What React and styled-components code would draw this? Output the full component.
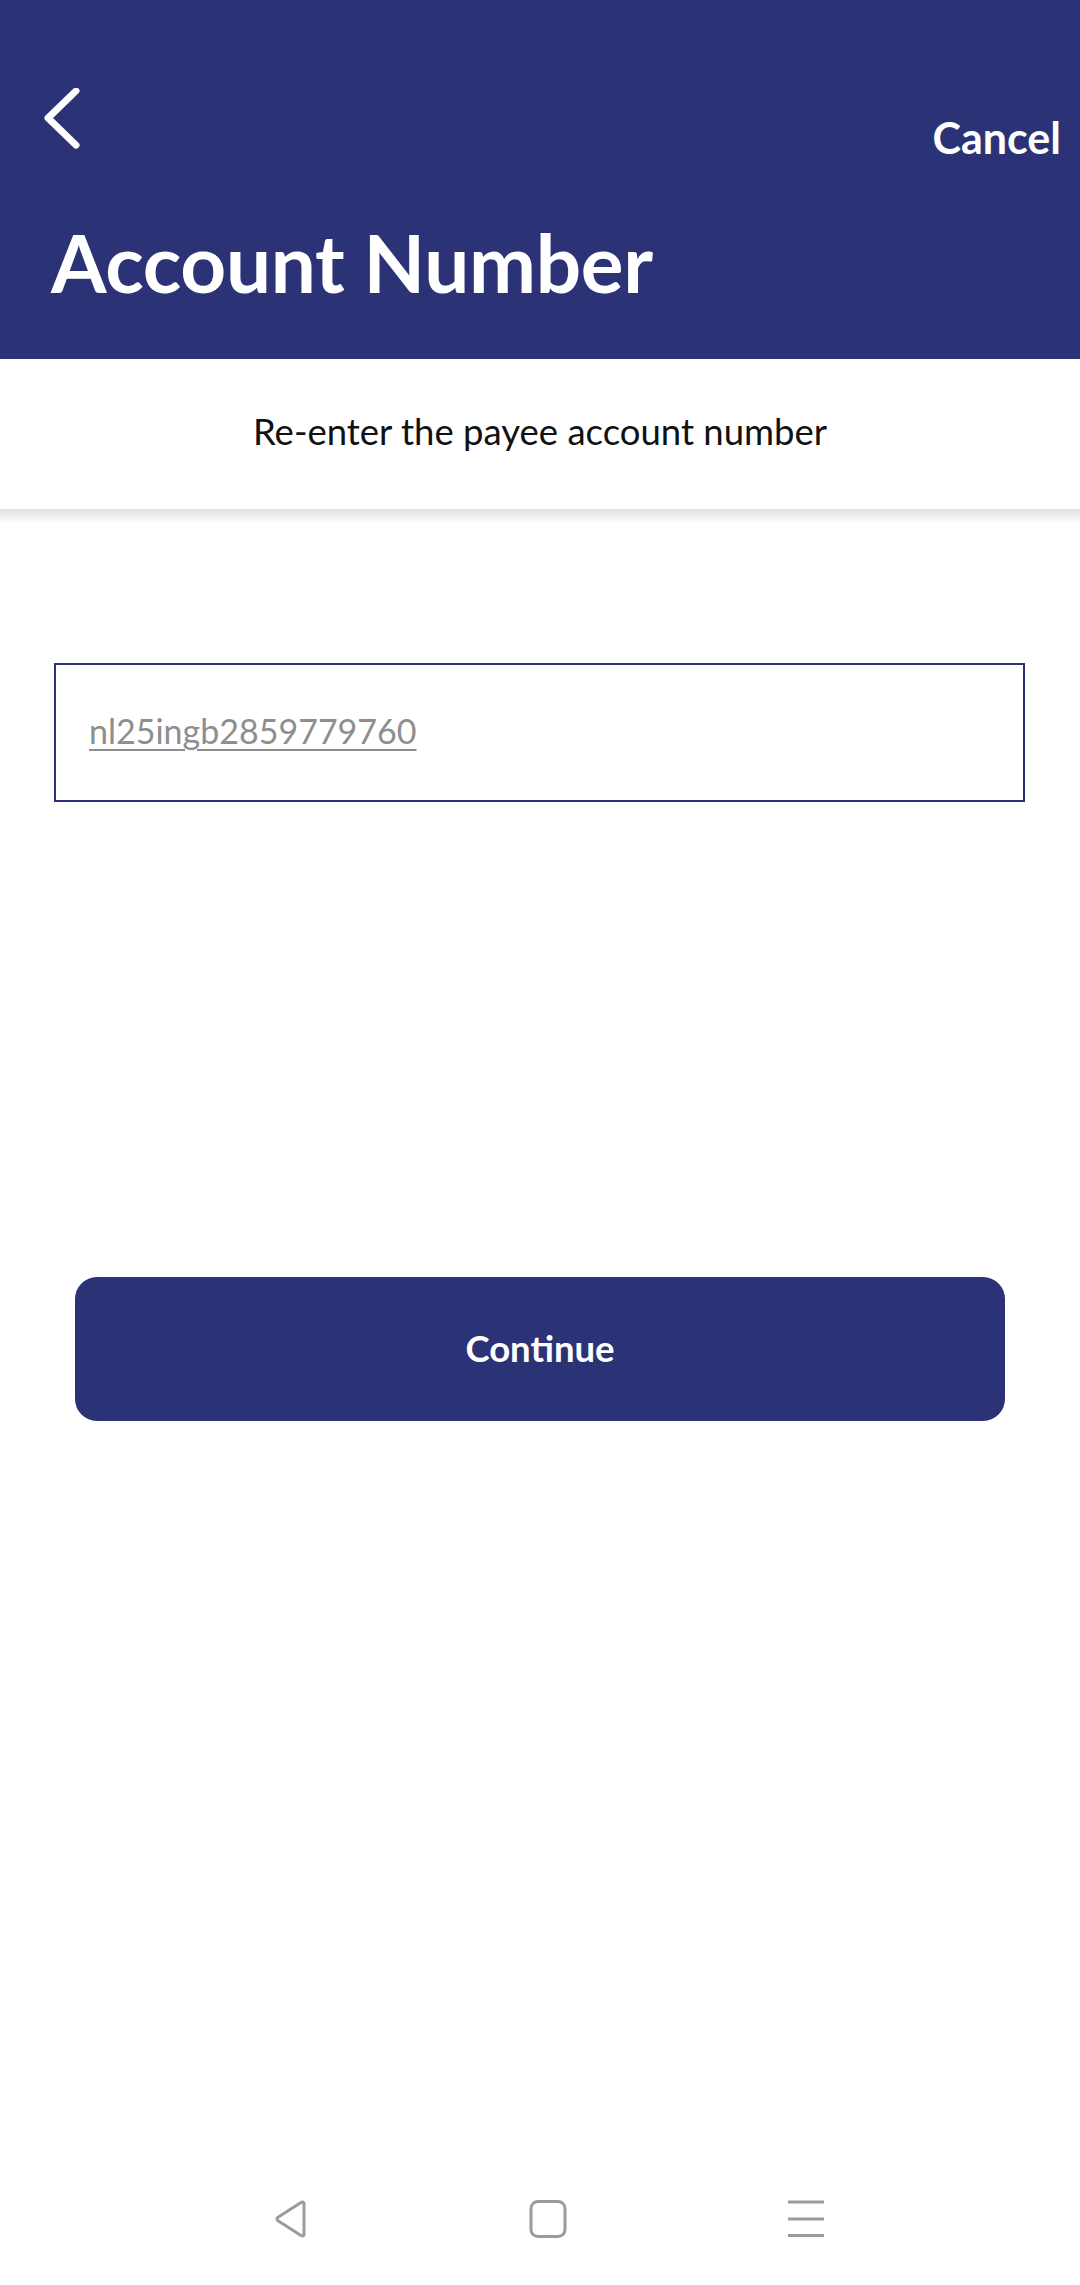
import React from 'react';
import styled, { createGlobalStyle } from 'styled-components';

const NAVY = '#2b3275';

const GlobalStyle = createGlobalStyle`
  html, body {
    margin: 0;
    padding: 0;
    background: #ffffff;
  }
  body {
    font-family: Lato, "Open Sans", sans-serif;
  }
  * {
    box-sizing: border-box;
  }
`;

const Page = styled.div`
  display: flex;
  flex-direction: column;
  min-height: 2285px;
  width: 1080px;
  background: #ffffff;
`;

const Header = styled.header`
  background: ${NAVY};
  color: #ffffff;
  height: 359px;
  padding: 88px 19px 0 40px;
`;

const TopRow = styled.div`
  display: flex;
  justify-content: space-between;
  align-items: baseline;
`;

const BackButton = styled.button`
  background: none;
  border: none;
  padding: 0;
  display: flex;
  cursor: pointer;
`;

const Cancel = styled.button`
  background: none;
  border: none;
  padding: 0;
  color: #ffffff;
  font-family: Lato, sans-serif;
  font-weight: 700;
  font-size: 43px;
  line-height: 1;
  cursor: pointer;
`;

const Title = styled.h1`
  margin: 63px 0 0 11px;
  font-family: Lato, sans-serif;
  font-weight: 700;
  font-size: 80px;
  line-height: 1;
  letter-spacing: -0.3px;
`;

const Subtitle = styled.section`
  padding: 50px 0 56px;
  text-align: center;
  font-size: 36.5px;
  line-height: 44px;
  color: #111111;
`;

const Divider = styled.div`
  height: 15px;
  background: linear-gradient(#e2e2e2, #f3f3f3 60%, #ffffff);
`;

const Main = styled.main`
  display: flex;
  flex-direction: column;
`;

const Field = styled.div`
  margin: 139px 55px 0 54px;
  height: 139px;
  border: 2.5px solid ${NAVY};
  display: flex;
  align-items: center;
  padding: 0 0 4px 33px;
`;

const FieldText = styled.span`
  font-size: 34px;
  color: #8e8e8e;
  text-decoration: underline;
  text-decoration-thickness: 2px;
  text-underline-offset: 5px;
`;

const PrimaryButton = styled.button`
  margin: 475px 75px 0 75px;
  height: 144px;
  border: none;
  border-radius: 22px;
  background: ${NAVY};
  color: #ffffff;
  font-family: Lato, sans-serif;
  font-weight: 700;
  font-size: 36.5px;
  padding-bottom: 4px;
  cursor: pointer;
`;

const NavBar = styled.nav`
  margin-top: auto;
  height: 126px;
  display: flex;
  align-items: center;
  padding: 0 0 6px 270px;
  gap: 218px;
  color: #9b9b9b;
`;

const NavIcon = styled.svg`
  width: 40px;
  height: 40px;
  display: block;
`;

function Chevron() {
  return (
    <svg width="44" height="66" viewBox="0 0 44 66">
      <path
        d="M36 6 L8 34 L36 62"
        fill="none"
        stroke="#ffffff"
        strokeWidth="7"
        strokeLinecap="round"
        strokeLinejoin="round"
        transform="translate(0 -3) scale(1 0.97)"
      />
    </svg>
  );
}

export default function App() {
  return (
    <Page>
      <GlobalStyle />
      <Header>
        <TopRow>
          <BackButton aria-label="Back">
            <Chevron />
          </BackButton>
          <Cancel>Cancel</Cancel>
        </TopRow>
        <Title>Account Number</Title>
      </Header>
      <Subtitle>Re-enter the payee account number</Subtitle>
      <Divider />
      <Main>
        <Field>
          <FieldText>nl25ingb2859779760</FieldText>
        </Field>
        <PrimaryButton>Continue</PrimaryButton>
      </Main>
      <NavBar>
        <NavIcon viewBox="0 0 40 40">
          <path
            d="M34 5 L34 35 Q34 38 31 36.5 L8 21.8 Q6 20 8 18.2 L31 3.5 Q34 2 34 5 Z"
            fill="none"
            stroke="currentColor"
            strokeWidth="3"
            strokeLinejoin="round"
          />
        </NavIcon>
        <NavIcon viewBox="0 0 40 40">
          <rect x="3" y="2.5" width="34" height="35" rx="7" fill="none" stroke="currentColor" strokeWidth="3" />
        </NavIcon>
        <NavIcon viewBox="0 0 40 40">
          <path d="M2 3 H38 M2 20 H38 M2 36.5 H38" stroke="currentColor" strokeWidth="3.2" />
        </NavIcon>
      </NavBar>
    </Page>
  );
}
